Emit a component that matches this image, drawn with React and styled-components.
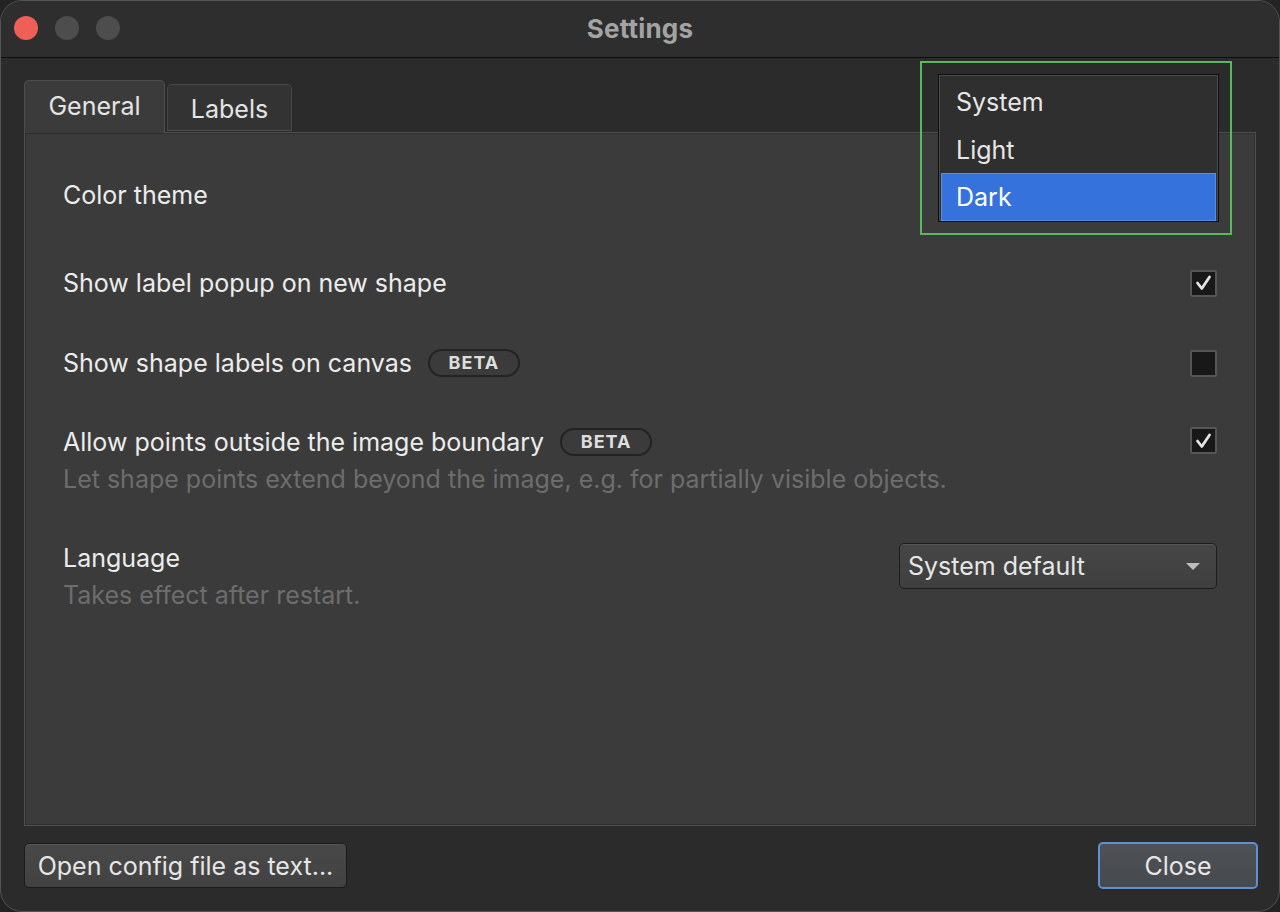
import React from "react";
import styled, { createGlobalStyle } from "styled-components";

const Global = createGlobalStyle`
  html, body { margin: 0; padding: 0; background: #232323; }
  body { font-family: Inter, "Open Sans", "Liberation Sans", sans-serif; -webkit-font-smoothing: antialiased; }
  * { box-sizing: border-box; }
`;

const Window = styled.div`
  position: relative;
  width: 1280px;
  height: 912px;
  display: flex;
  flex-direction: column;
  background: #2b2b2b;
  border: 1px solid #545454;
  border-radius: 22px;
  overflow: hidden;
`;

const TitleBar = styled.div`
  height: 57px;
  flex: none;
  display: grid;
  grid-template-columns: 1fr auto 1fr;
  align-items: center;
  padding: 0 13px 2px;
  background: #2e2e2e;
  border-bottom: 1px solid #0e0e0e;
`;

const Lights = styled.div`
  display: flex;
  gap: 17px;
`;

const Light = styled.span`
  width: 24px;
  height: 24px;
  border-radius: 50%;
  background: ${(p) => p.$color};
`;

const Title = styled.div`
  font-size: 26px;
  font-weight: 700;
  color: #a3a3a3;
  letter-spacing: 0.2px;
`;

const Body = styled.div`
  flex: 1;
  display: flex;
  flex-direction: column;
  padding: 23px 23px 0 23px;
`;

const TabBar = styled.div`
  display: flex;
  align-items: flex-end;
  gap: 2px;
  height: 52px;
  margin-bottom: -1px;
  position: relative;
  z-index: 1;
`;

const Tab = styled.div`
  display: flex;
  align-items: center;
  justify-content: center;
  height: ${(p) => (p.$active ? "53px" : "47px")};
  margin-bottom: ${(p) => (p.$active ? "0" : "2px")};
  padding: ${(p) => (p.$active ? "0 0 2px" : "2px 0 0")};
  font-size: 25px;
  color: #e4e4e4;
  background: ${(p) => (p.$active ? "#3b3b3b" : "#333333")};
  border: 1px solid ${(p) => (p.$active ? "#4d4d4d" : "#474747")};
  border-bottom: ${(p) => (p.$active ? "none" : "1px solid #4d4d4d")};
  border-radius: 5px 5px 0 0;
  width: ${(p) => p.$w}px;
`;

const Pane = styled.div`
  height: 694px;
  background: #3b3b3b;
  border: 1px solid #4f4f4f;
  box-shadow: inset 0 0 0 1px #2f2f2f;
  padding: 22px 38px 0 38px;
  display: flex;
  flex-direction: column;
`;

const Row = styled.div`
  display: flex;
  align-items: ${(p) => (p.$top ? "flex-start" : "center")};
  justify-content: space-between;
  height: ${(p) => p.$h}px;
  padding-top: ${(p) => p.$pt || 0}px;
  margin-top: ${(p) => p.$mt || 0}px;
`;

const LabelCol = styled.div`
  display: flex;
  flex-direction: column;
  gap: 7px;
`;

const Label = styled.div`
  display: flex;
  align-items: center;
  gap: 16px;
  font-size: 25px;
  color: #ececec;
  line-height: 30px;
`;

const Hint = styled.div`
  font-size: 25px;
  color: #6d6d6d;
  line-height: 30px;
`;

const Beta = styled.span`
  display: inline-flex;
  align-items: center;
  justify-content: center;
  width: 92px;
  height: 28px;
  border: 2px solid #232323;
  border-radius: 14px;
  font-size: 18px;
  font-weight: 700;
  letter-spacing: 1px;
  color: #dedede;
`;

const Check = styled.span`
  width: 27px;
  height: 27px;
  flex: none;
  background: #181818;
  border: 2px solid #565656;
  border-radius: 2px;
  display: flex;
  align-items: center;
  justify-content: center;
`;

const Select = styled.div`
  width: 318px;
  height: 46px;
  display: flex;
  align-items: center;
  justify-content: space-between;
  padding: 0 16px 0 8px;
  background: linear-gradient(#464646, #3f3f3f);
  border: 1px solid #1d1d1d;
  box-shadow: inset 0 1px 0 #585858;
  border-radius: 5px;
  font-size: 25px;
  color: #e6e6e6;
`;

const Caret = styled.span`
  width: 0;
  height: 0;
  border-left: 7px solid transparent;
  border-right: 7px solid transparent;
  border-top: 7px solid #bdbdbd;
`;

const Footer = styled.div`
  flex: 1;
  display: flex;
  justify-content: space-between;
  align-items: center;
  padding: 0 0 6px 0;
`;

const Button = styled.button`
  height: ${(p) => (p.$primary ? "47px" : "45px")};
  width: ${(p) => p.$w}px;
  font-family: inherit;
  font-size: 25px;
  color: #e6e6e6;
  border-radius: 5px;
  padding: 0;
  background: ${(p) => (p.$primary ? "linear-gradient(#4e5156, #46494e)" : "linear-gradient(#484848, #424242)")};
  border: ${(p) => (p.$primary ? "2px solid #5e90d3" : "1px solid #1b1b1b")};
  box-shadow: ${(p) => (p.$primary ? "none" : "inset 0 1px 0 #565656")};
  margin-right: ${(p) => (p.$primary ? "-2px" : "0")};
`;

const Focus = styled.div`
  position: absolute;
  left: 919px;
  top: 60px;
  width: 312px;
  height: 174px;
  border: 2px solid #5cb85c;
  padding: 11px 11px 0 16px;
  z-index: 5;
`;

const Menu = styled.div`
  width: 281px;
  background: #2f2f2f;
  border: 1px solid #0f0f0f;
  box-shadow: inset 0 0 0 1px #4a4a4a;
  padding: 3px 2px 0 2px;
  display: flex;
  flex-direction: column;
`;

const Item = styled.div`
  height: ${(p) => p.$h}px;
  display: flex;
  align-items: center;
  padding-left: ${(p) => (p.$selected ? 14 : 15)}px;
  font-size: 25px;
  color: ${(p) => (p.$selected ? "#ffffff" : "#e6e6e6")};
  background: ${(p) => (p.$selected ? "#3572dc" : "transparent")};
  border: ${(p) => (p.$selected ? "1px solid #5b8be0" : "none")};
`;

const CheckMark = () => (
  <svg width="17" height="16" viewBox="0 0 17 16">
    <path d="M2.5 8 L6.8 13.5 L14.5 2" fill="none" stroke="#e4e4e4" strokeWidth="2.8" strokeLinecap="round" strokeLinejoin="round" />
  </svg>
);

export default function App() {
  return (
    <>
      <Global />
      <Window>
        <TitleBar>
          <Lights>
            <Light $color="#ee5f57" />
            <Light $color="#4d4d4d" />
            <Light $color="#4d4d4d" />
          </Lights>
          <Title>Settings</Title>
          <div />
        </TitleBar>
        <Body>
          <TabBar>
            <Tab $active $w={141}>General</Tab>
            <Tab $w={125}>Labels</Tab>
          </TabBar>
          <Pane>
            <Row $h={80}>
              <Label>Color theme</Label>
            </Row>
            <Row $h={80} $mt={8}>
              <Label>Show label popup on new shape</Label>
              <Check><CheckMark /></Check>
            </Row>
            <Row $h={80}>
              <Label>Show shape labels on canvas <Beta>BETA</Beta></Label>
              <Check />
            </Row>
            <Row $h={122} $pt={24} $top>
              <LabelCol>
                <Label>Allow points outside the image boundary <Beta>BETA</Beta></Label>
                <Hint>Let shape points extend beyond the image, e.g. for partially visible objects.</Hint>
              </LabelCol>
              <Check><CheckMark /></Check>
            </Row>
            <Row $h={90} $pt={18} $top>
              <LabelCol>
                <Label>Language</Label>
                <Hint>Takes effect after restart.</Hint>
              </LabelCol>
              <Select>
                System default
                <Caret />
              </Select>
            </Row>
          </Pane>
          <Footer>
            <Button $w={323}>Open config file as text...</Button>
            <Button $primary $w={160}>Close</Button>
          </Footer>
        </Body>
        <Focus>
          <Menu>
            <Item $h={48}>System</Item>
            <Item $h={47}>Light</Item>
            <Item $h={48} $selected>Dark</Item>
          </Menu>
        </Focus>
      </Window>
    </>
  );
}
